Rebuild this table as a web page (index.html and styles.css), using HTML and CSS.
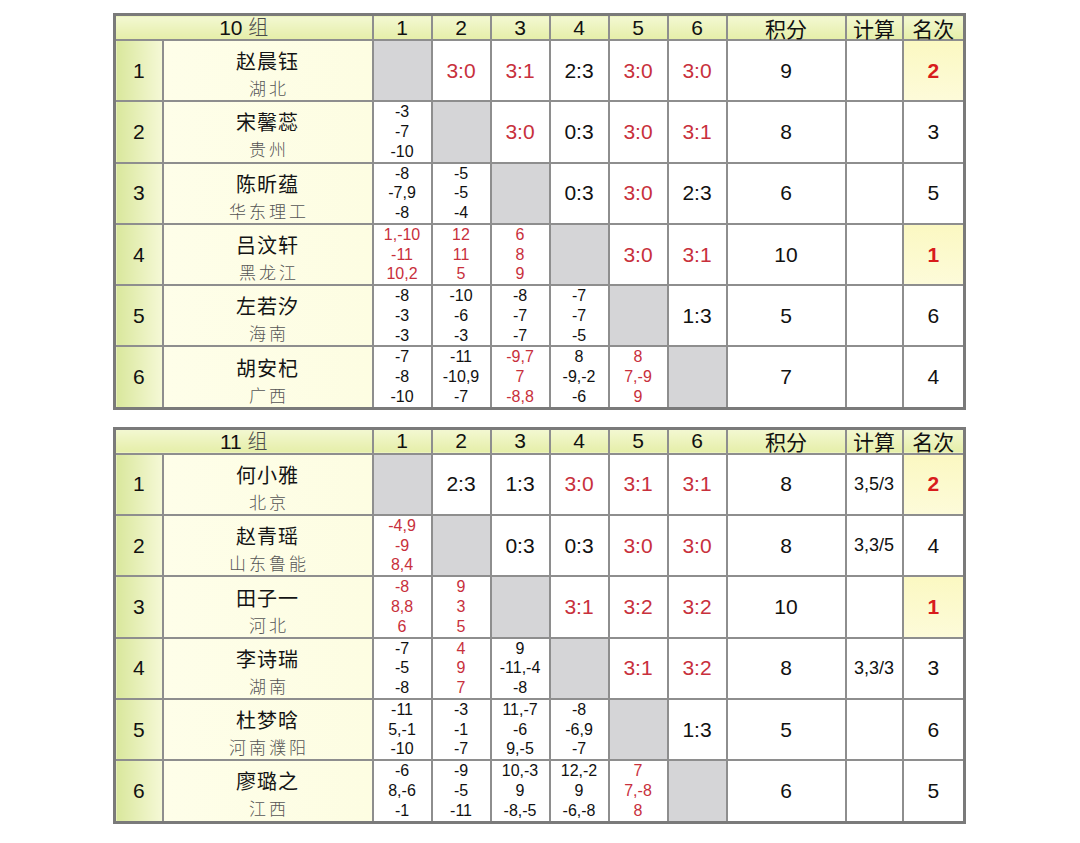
FILE: index.html
```html
<!DOCTYPE html>
<html lang="zh">
<head>
<meta charset="utf-8">
<title>小组赛</title>
<link rel="stylesheet" href="styles.css">
</head>
<body>
<div class="page">

<table class="grp">
<colgroup><col class="c-no"><col class="c-name"><col class="c-r"><col class="c-r"><col class="c-r"><col class="c-r"><col class="c-r"><col class="c-r"><col class="c-pts"><col class="c-calc"><col class="c-rank"></colgroup>
<thead><tr>
<th colspan="2">10 <span class="cj">组</span></th><th>1</th><th>2</th><th>3</th><th>4</th><th>5</th><th>6</th><th class="cj">积分</th><th class="cj">计算</th><th class="cj">名次</th>
</tr></thead>
<tbody>
<tr><td class="no">1</td><td class="nm"><div class="nb"><span class="pn">赵晨钰</span><span class="rg">湖北</span></div></td>
<td class="x"></td><td class="sc red">3:0</td><td class="sc red">3:1</td><td class="sc">2:3</td><td class="sc red">3:0</td><td class="sc red">3:0</td><td class="pt">9</td><td class="cc"></td><td class="rk hi red">2</td></tr>
<tr><td class="no">2</td><td class="nm"><div class="nb"><span class="pn">宋馨蕊</span><span class="rg">贵州</span></div></td>
<td class="gs"><div class="g">-3<br>-7<br>-10</div></td><td class="x"></td><td class="sc red">3:0</td><td class="sc">0:3</td><td class="sc red">3:0</td><td class="sc red">3:1</td><td class="pt">8</td><td class="cc"></td><td class="rk">3</td></tr>
<tr><td class="no">3</td><td class="nm"><div class="nb"><span class="pn">陈昕蕴</span><span class="rg">华东理工</span></div></td>
<td class="gs"><div class="g">-8<br>-7,9<br>-8</div></td><td class="gs"><div class="g">-5<br>-5<br>-4</div></td><td class="x"></td><td class="sc">0:3</td><td class="sc red">3:0</td><td class="sc">2:3</td><td class="pt">6</td><td class="cc"></td><td class="rk">5</td></tr>
<tr><td class="no">4</td><td class="nm"><div class="nb"><span class="pn">吕汶轩</span><span class="rg">黑龙江</span></div></td>
<td class="gs red"><div class="g">1,-10<br>-11<br>10,2</div></td><td class="gs red"><div class="g">12<br>11<br>5</div></td><td class="gs red"><div class="g">6<br>8<br>9</div></td><td class="x"></td><td class="sc red">3:0</td><td class="sc red">3:1</td><td class="pt">10</td><td class="cc"></td><td class="rk hi red">1</td></tr>
<tr><td class="no">5</td><td class="nm"><div class="nb"><span class="pn">左若汐</span><span class="rg">海南</span></div></td>
<td class="gs"><div class="g">-8<br>-3<br>-3</div></td><td class="gs"><div class="g">-10<br>-6<br>-3</div></td><td class="gs"><div class="g">-8<br>-7<br>-7</div></td><td class="gs"><div class="g">-7<br>-7<br>-5</div></td><td class="x"></td><td class="sc">1:3</td><td class="pt">5</td><td class="cc"></td><td class="rk">6</td></tr>
<tr><td class="no">6</td><td class="nm"><div class="nb"><span class="pn">胡安杞</span><span class="rg">广西</span></div></td>
<td class="gs"><div class="g">-7<br>-8<br>-10</div></td><td class="gs"><div class="g">-11<br>-10,9<br>-7</div></td><td class="gs red"><div class="g">-9,7<br>7<br>-8,8</div></td><td class="gs"><div class="g">8<br>-9,-2<br>-6</div></td><td class="gs red"><div class="g">8<br>7,-9<br>9</div></td><td class="x"></td><td class="pt">7</td><td class="cc"></td><td class="rk">4</td></tr>
</tbody>
</table>

<table class="grp">
<colgroup><col class="c-no"><col class="c-name"><col class="c-r"><col class="c-r"><col class="c-r"><col class="c-r"><col class="c-r"><col class="c-r"><col class="c-pts"><col class="c-calc"><col class="c-rank"></colgroup>
<thead><tr>
<th colspan="2">11 <span class="cj">组</span></th><th>1</th><th>2</th><th>3</th><th>4</th><th>5</th><th>6</th><th class="cj">积分</th><th class="cj">计算</th><th class="cj">名次</th>
</tr></thead>
<tbody>
<tr><td class="no">1</td><td class="nm"><div class="nb"><span class="pn">何小雅</span><span class="rg">北京</span></div></td>
<td class="x"></td><td class="sc">2:3</td><td class="sc">1:3</td><td class="sc red">3:0</td><td class="sc red">3:1</td><td class="sc red">3:1</td><td class="pt">8</td><td class="cc">3,5/3</td><td class="rk hi red">2</td></tr>
<tr><td class="no">2</td><td class="nm"><div class="nb"><span class="pn">赵青瑶</span><span class="rg">山东鲁能</span></div></td>
<td class="gs red"><div class="g">-4,9<br>-9<br>8,4</div></td><td class="x"></td><td class="sc">0:3</td><td class="sc">0:3</td><td class="sc red">3:0</td><td class="sc red">3:0</td><td class="pt">8</td><td class="cc">3,3/5</td><td class="rk">4</td></tr>
<tr><td class="no">3</td><td class="nm"><div class="nb"><span class="pn">田子一</span><span class="rg">河北</span></div></td>
<td class="gs red"><div class="g">-8<br>8,8<br>6</div></td><td class="gs red"><div class="g">9<br>3<br>5</div></td><td class="x"></td><td class="sc red">3:1</td><td class="sc red">3:2</td><td class="sc red">3:2</td><td class="pt">10</td><td class="cc"></td><td class="rk hi red">1</td></tr>
<tr><td class="no">4</td><td class="nm"><div class="nb"><span class="pn">李诗瑞</span><span class="rg">湖南</span></div></td>
<td class="gs"><div class="g">-7<br>-5<br>-8</div></td><td class="gs red"><div class="g">4<br>9<br>7</div></td><td class="gs"><div class="g">9<br>-11,-4<br>-8</div></td><td class="x"></td><td class="sc red">3:1</td><td class="sc red">3:2</td><td class="pt">8</td><td class="cc">3,3/3</td><td class="rk">3</td></tr>
<tr><td class="no">5</td><td class="nm"><div class="nb"><span class="pn">杜梦晗</span><span class="rg">河南濮阳</span></div></td>
<td class="gs"><div class="g">-11<br>5,-1<br>-10</div></td><td class="gs"><div class="g">-3<br>-1<br>-7</div></td><td class="gs"><div class="g">11,-7<br>-6<br>9,-5</div></td><td class="gs"><div class="g">-8<br>-6,9<br>-7</div></td><td class="x"></td><td class="sc">1:3</td><td class="pt">5</td><td class="cc"></td><td class="rk">6</td></tr>
<tr><td class="no">6</td><td class="nm"><div class="nb"><span class="pn">廖璐之</span><span class="rg">江西</span></div></td>
<td class="gs"><div class="g">-6<br>8,-6<br>-1</div></td><td class="gs"><div class="g">-9<br>-5<br>-11</div></td><td class="gs"><div class="g">10,-3<br>9<br>-8,-5</div></td><td class="gs"><div class="g">12,-2<br>9<br>-6,-8</div></td><td class="gs red"><div class="g">7<br>7,-8<br>8</div></td><td class="x"></td><td class="pt">6</td><td class="cc"></td><td class="rk">5</td></tr>
</tbody>
</table>

</div>
</body>
</html>
```

FILE: styles.css
```css
html, body {
  margin: 0;
  padding: 0;
  background: #ffffff;
}
body {
  font-family: "Liberation Sans", Arial, "Noto Sans CJK SC", sans-serif;
  color: #111;
}
.page {
  padding: 13px 0 0 113px;
  display: flex;
  flex-direction: column;
  gap: 17px;
}
.grp {
  border-collapse: collapse;
  table-layout: fixed;
  width: 852px;
  border: 3px solid #7a7a7a;
}
.c-no { width: 48px; }
.c-name { width: 210px; }
.c-r { width: 59px; }
.c-pts { width: 119px; }
.c-calc { width: 57px; }
.c-rank { width: 62px; }

.grp th, .grp td {
  border: 2px solid #8e8e8e;
  padding: 0;
  text-align: center;
  vertical-align: middle;
}
.grp th {
  height: 22px;
  font-weight: normal;
  font-size: 21px;
  line-height: 22px;
  color: #111;
  background: linear-gradient(to bottom, #f3f8d2, #e5eea8);
}
.cj {
  font-family: "Noto Sans CJK SC", sans-serif;
  font-weight: 300;
  color: #4a4a4a;
  font-size: 20px;
}
.grp td {
  height: 59.3px;
  background: #ffffff;
}
.no {
  font-size: 21px;
  background: linear-gradient(to right, #d9e79c, #f5f8d6) !important;
}
.nm {
  background: linear-gradient(to right, #fefee9, #fdfde2) !important;
}
.nb {
  height: 59px;
  display: flex;
  flex-direction: column;
  align-items: center;
}
.pn {
  margin-top: 7px;
  font-family: "Noto Sans CJK SC", sans-serif;
  font-weight: 400;
  font-size: 20px;
  line-height: 26px;
  letter-spacing: 1px;
  color: #141414;
}
.rg {
  margin-top: 5px;
  font-family: "Noto Sans CJK SC", sans-serif;
  font-weight: 300;
  font-size: 17px;
  line-height: 18px;
  letter-spacing: 3px;
  padding-left: 3px;
  color: #555;
}
.x {
  background: #d5d5d7 !important;
}
.sc, .pt {
  font-size: 21px;
}
.cc {
  font-size: 18px;
}
.rk {
  font-size: 21px;
}
.rk.hi {
  background: linear-gradient(to bottom, #fbf8c2, #fdfbd9) !important;
  font-weight: bold;
}
.gs {
  vertical-align: top !important;
}
.g {
  height: 59px;
  font-size: 16px;
  line-height: 19.7px;
}
.red {
  color: #c8303c;
}
.rk.red {
  color: #d81c1c;
}
```
